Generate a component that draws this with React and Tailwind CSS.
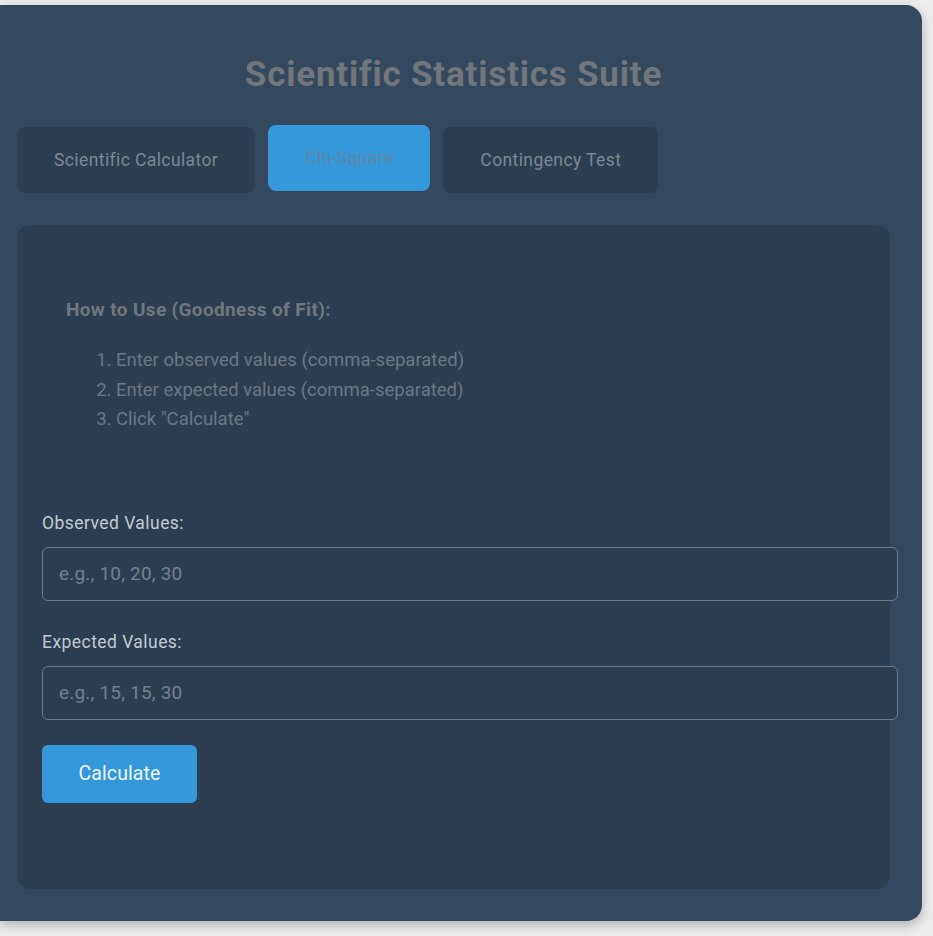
import React, { useState } from "react";

const tabs = ["Scientific Calculator", "Chi-Square", "Contingency Test"];

const steps = [
  "Enter observed values (comma-separated)",
  "Enter expected values (comma-separated)",
  'Click "Calculate"',
];

const Field = ({ label, placeholder, value, onChange }) => (
  <div className="flex flex-col">
    <label className="text-[17.5px] tracking-[0.45px] text-[#c3cad1] leading-6 mb-[12px]">{label}</label>
    <input
      value={value}
      onChange={(e) => onChange(e.target.value)}
      placeholder={placeholder}
      className="h-[54px] w-[856px] rounded-md border border-[#6b7b8a] bg-[#2c3e50] px-4 text-[19px] tracking-[0.2px] text-[#ecf0f1] placeholder:text-[#75818c] outline-none"
    />
  </div>
);

export default function App() {
  const [active, setActive] = useState(1);
  const [observed, setObserved] = useState("");
  const [expected, setExpected] = useState("");

  return (
    <div
      className="min-h-[936px] bg-[#ececec] pt-[5px]"
      style={{ fontFamily: "Roboto, 'Liberation Sans', sans-serif" }}
    >
      <div className="w-[922px] h-[916px] bg-[#34495e] rounded-r-2xl shadow-[0_4px_12px_rgba(0,0,0,0.25)] pl-[17px] pr-[32px] pt-[50px]">
        <h1 className="text-center text-[35px] tracking-[0.8px] font-bold text-[#727579] leading-10">
          Scientific Statistics Suite
        </h1>

        <div className="flex gap-[13px] mt-[30px] h-[68px]">
          {tabs.map((t, i) =>
            i === active ? (
              <button
                key={t}
                onClick={() => setActive(i)}
                className="h-[66px] px-[37px] rounded-lg bg-[#3498db] text-[17.5px] tracking-[0.35px] text-[#5f86a6] flex items-center"
              >
                {t}
              </button>
            ) : (
              <button
                key={t}
                onClick={() => setActive(i)}
                className="h-[66px] mt-[2px] px-[37px] rounded-lg bg-[#2c3e50] text-[17.5px] tracking-[0.4px] text-[#7c8790] flex items-center"
              >
                {t}
              </button>
            )
          )}
        </div>

        <div className="mt-[32px] h-[664px] bg-[#2c3e50] rounded-[14px] px-[25px] pt-[73px]">
          <div className="pl-[24px]">
            <h3 className="text-[19px] tracking-[0.35px] font-bold text-[#72777d] leading-6">
              How to Use (Goodness of Fit):
            </h3>
            <ol className="mt-[24px] pl-[50px] list-decimal text-[18.5px] text-[#6d7782] leading-[29.5px]">
              {steps.map((s) => (
                <li key={s}>{s}</li>
              ))}
            </ol>
          </div>

          <div className="mt-[76px] flex flex-col">
            <Field
              label="Observed Values:"
              placeholder="e.g., 10, 20, 30"
              value={observed}
              onChange={setObserved}
            />
            <div className="mt-[29px]">
              <Field
                label="Expected Values:"
                placeholder="e.g., 15, 15, 30"
                value={expected}
                onChange={setExpected}
              />
            </div>
          </div>

          <button className="mt-[25px] h-[58px] w-[155px] rounded-md bg-[#3498db] text-[19.5px] tracking-[0.1px] text-[#f0f4f7]">
            Calculate
          </button>
        </div>
      </div>
    </div>
  );
}
